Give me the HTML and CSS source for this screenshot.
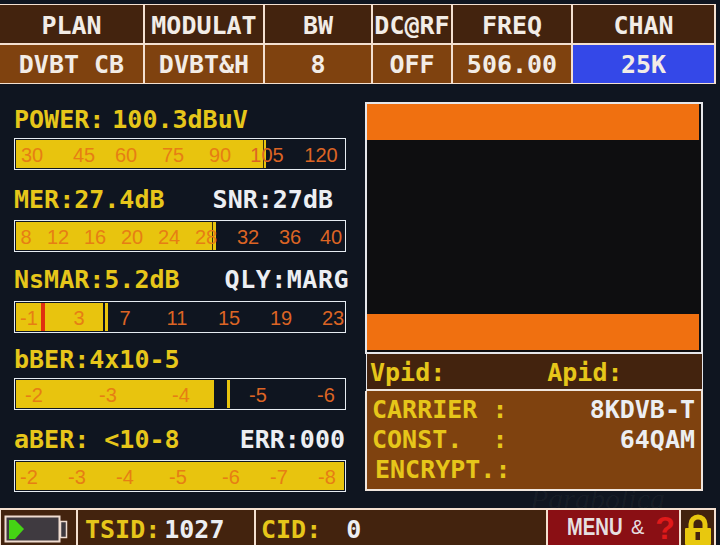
FILE: index.html
```html
<!DOCTYPE html>
<html lang="en">
<head>
  <meta charset="UTF-8">
  <meta name="viewport" content="width=device-width, initial-scale=1.0">
  <title>Meter</title>
  <link rel="stylesheet" href="styles.css">
</head>
<body>
  <div class="screen">
    <div class="top-table">
      <div class="cell head">PLAN</div>
      <div class="cell head">MODULAT</div>
      <div class="cell head">BW</div>
      <div class="cell head">DC@RF</div>
      <div class="cell head">FREQ</div>
      <div class="cell head">CHAN</div>
      <div class="cell val">DVBT CB</div>
      <div class="cell val">DVBT&amp;H</div>
      <div class="cell val">8</div>
      <div class="cell val">OFF</div>
      <div class="cell val">506.00</div>
      <div class="cell val active">25K</div>
    </div>

    <div class="main">
      <section class="gauges">
        <div class="reading r1">
          <div class="label"><span class="yellow name-power">POWER:</span><span class="yellow">100.3dBuV</span></div>
          <div class="gauge">
            <div class="fill" style="width:250px"></div>
            <div class="tick dark" style="left:248px"></div>
            <span class="mark on" style="left:17px;">30</span>
            <span class="mark on" style="left:69px;">45</span>
            <span class="mark on" style="left:111px;">60</span>
            <span class="mark on" style="left:158px;">75</span>
            <span class="mark on" style="left:205px;">90</span>
            <span class="mark" style="left:252px;">105</span>
            <span class="mark" style="left:306px;">120</span>
          </div>
        </div>
        <div class="reading r2">
          <div class="label"><span class="yellow">MER:27.4dB</span><span class="white snr">SNR:27dB</span></div>
          <div class="gauge">
            <div class="fill" style="width:200px"></div>
            <div class="tick dark" style="left:197px"></div>
            <span class="mark on" style="left:11px;">8</span>
            <span class="mark on" style="left:43px;">12</span>
            <span class="mark on" style="left:80px;">16</span>
            <span class="mark on" style="left:117px;">20</span>
            <span class="mark on" style="left:154px;">24</span>
            <span class="mark on" style="left:191px;">28</span>
            <span class="mark" style="left:233px;">32</span>
            <span class="mark" style="left:275px;">36</span>
            <span class="mark" style="left:316px;">40</span>
          </div>
        </div>
        <div class="reading r3">
          <div class="label"><span class="yellow">NsMAR:5.2dB</span><span class="white qly">QLY:MARG</span></div>
          <div class="gauge">
            <div class="fill" style="width:87px"></div>
            <div class="tick red" style="left:26px"></div>
            <div class="tick" style="left:90px"></div>
            <span class="mark on" style="left:14px;">-1</span>
            <span class="mark on" style="left:64px;">3</span>
            <span class="mark" style="left:110px;">7</span>
            <span class="mark" style="left:162px;">11</span>
            <span class="mark" style="left:214px;">15</span>
            <span class="mark" style="left:266px;">19</span>
            <span class="mark" style="left:318px;">23</span>
          </div>
        </div>
        <div class="reading r4">
          <div class="label"><span class="yellow">bBER:4x10-5</span></div>
          <div class="gauge">
            <div class="fill" style="width:198px"></div>
            <div class="tick" style="left:212px"></div>
            <span class="mark on" style="left:19px;">-2</span>
            <span class="mark on" style="left:93px;">-3</span>
            <span class="mark on" style="left:166px;">-4</span>
            <span class="mark" style="left:243px;">-5</span>
            <span class="mark" style="left:311px;">-6</span>
          </div>
        </div>
        <div class="reading r5">
          <div class="label"><span class="yellow">aBER: &lt;10-8</span><span class="white err">ERR:000</span></div>
          <div class="gauge">
            <div class="fill full"></div>
            <span class="mark on" style="left:14px;">-2</span>
            <span class="mark on" style="left:62px;">-3</span>
            <span class="mark on" style="left:110px;">-4</span>
            <span class="mark on" style="left:163px;">-5</span>
            <span class="mark on" style="left:216px;">-6</span>
            <span class="mark on" style="left:264px;">-7</span>
            <span class="mark on" style="left:312px;">-8</span>
          </div>
        </div>
      </section>

      <section class="panel">
        <div class="picture">
          <div class="band"></div>
          <div class="band"></div>
        </div>
        <div class="pids">
          <span class="yellow">Vpid:</span>
          <span class="yellow">Apid:</span>
        </div>
        <div class="info">
          <div class="info-row"><span class="yellow">CARRIER :</span><span class="white">8KDVB-T</span></div>
          <div class="info-row"><span class="yellow">CONST.&nbsp;&nbsp;:</span><span class="white">64QAM</span></div>
          <div class="info-row shifted"><span class="yellow">ENCRYPT.:</span></div>
        </div>
      </section>
    </div>

    <div class="status">
      <div class="st batt">
        <svg width="64" height="30" viewBox="0 0 64 30">
          <rect x="1.5" y="1.5" width="54" height="25" fill="#3f3a40" stroke="#f0dcd0" stroke-width="2"/>
          <rect x="56.5" y="6.5" width="6" height="16" fill="#3f3a40" stroke="#f0dcd0" stroke-width="1.5"/>
          <path d="M5 5 L11 5 L20 14 L11 24 L5 24 Z" fill="#45d414"/>
        </svg>
      </div>
      <div class="st tsid"><span class="yellow">TSID:</span><span class="white">1027</span></div>
      <div class="st cid"><span class="yellow">CID:</span><span class="white">0</span></div>
      <div class="st menu">
        <span class="menu-txt">MENU</span><span class="amp">&amp;</span><span class="help">?</span>
      </div>
      <div class="st lock">
        <svg width="26" height="31" viewBox="0 0 26 31">
          <path d="M6 15 V10 a7 7 0 0 1 14 0 V15" fill="none" stroke="#e8c80e" stroke-width="5"/>
          <rect x="0" y="14" width="26" height="17" rx="1" fill="#e8c80e"/>
          <rect x="10.5" y="18" width="4.5" height="8" fill="#43230e"/>
        </svg>
      </div>
    </div>
    <div class="watermark">Parabolica</div>
  </div>
</body>
</html>
```

FILE: styles.css
```css
html, body {
  margin: 0;
  padding: 0;
  background: #0f1520;
}
.screen {
  position: relative;
  width: 720px;
  height: 545px;
  overflow: hidden;
  font-family: "DejaVu Sans Mono", monospace;
  font-weight: bold;
  font-size: 25px;
  background: #0f1520;
  box-sizing: border-box;
  padding-top: 4px;
}
.yellow { color: #e6c61a; }
.white { color: #eceef2; }

/* top table */
.top-table {
  display: grid;
  grid-template-columns: 145px 120px 108px 80px 120px 143px;
  grid-template-rows: 40px 38px;
  width: 716px;
  border-top: 1px solid #f4e0d0;
  border-bottom: 2px solid #f4e0d0;
  box-sizing: border-box;
  height: 80px;
}
.cell {
  display: flex;
  align-items: center;
  justify-content: center;
  color: #f2ece6;
  border-right: 2px solid #f4e0d0;
  box-sizing: border-box;
  white-space: nowrap;
}
.head {
  padding-top: 2px;
  background: #43230e;
  border-bottom: 2px solid #f4e0d0;
}
.val {
  padding-top: 1px;
  background: #7f420f;
}
.active {
  background: #3448e8;
}

.main {
  display: flex;
  height: 424px;
}

/* gauges */
.gauges {
  width: 365px;
  box-sizing: border-box;
  padding: 18px 0 0 14px;
}
.reading {
  width: 332px;
  height: 80px;
}
.label {
  display: flex;
  justify-content: space-between;
  height: 34px;
  line-height: 35px;
  white-space: nowrap;
}
.r1 .label { justify-content: flex-start; }
.name-power { margin-right: 8px; }
.snr { margin-right: 13px; }
.qly { margin-right: -3px; letter-spacing: 0.5px; }
.err { margin-right: 1px; }
.r1 .gauge, .r4 .gauge { margin-top: 2px; }
.r2 .gauge, .r5 .gauge { margin-top: 4px; }
.r3 .gauge { margin-top: 5px; }
.gauge {
  position: relative;
  height: 32px;
  box-sizing: border-box;
  border: 1px solid #e6ecf2;
  overflow: hidden;
}
.fill {
  position: absolute;
  left: 1px;
  top: 1px;
  bottom: 1px;
  background: #e8c40e;
}
.fill.full { right: 1px; }
.tick {
  position: absolute;
  top: 1px;
  bottom: 1px;
  width: 3px;
  background: #e8c40e;
}
.tick.dark { width: 1px; background: #3a3010; }
.tick.red { width: 4px; background: #e03010; }
.mark {
  position: absolute;
  top: 0;
  line-height: 32px;
  transform: translateX(-50%);
  font-family: "Liberation Sans", sans-serif;
  font-weight: normal;
  font-size: 20px;
  color: #dc6424;
}
.mark.on { color: #e67e14; }

/* right panel */
.panel {
  width: 338px;
  margin-top: 18px;
}
.picture {
  display: flex;
  flex-direction: column;
  justify-content: space-between;
  height: 252px;
  box-sizing: border-box;
  border: 2px solid #e6e6ea;
  background: #0e0e10;
  padding: 0 2px 2px 0;
}
.band {
  height: 36px;
  background: #f07010;
}
.pids {
  display: flex;
  gap: 102px;
  height: 37px;
  box-sizing: border-box;
  padding-left: 3px;
  margin-left: 1px;
  line-height: 38px;
  background: #43230e;
  border-left: 1px solid #e6e6ea;
  border-right: 1px solid #e6e6ea;
  border-bottom: 2px solid #f0e6de;
}
.info {
  height: 100px;
  box-sizing: border-box;
  padding: 4px 6px 0 5px;
  background: #7f420f;
  border: 2px solid #f0e6de;
  border-top: 0;
}
.info-row {
  display: flex;
  justify-content: space-between;
  height: 30px;
  line-height: 30px;
}
.info-row.shifted { padding-left: 3px; }

/* bottom bar */
.status {
  position: absolute;
  left: 0;
  top: 508px;
  display: flex;
  width: 716px;
  height: 37px;
  border-top: 2px solid #f4e0d0;
  border-left: 1px solid #f4e0d0;
  box-sizing: border-box;
}
.st {
  display: flex;
  align-items: center;
  background: #43230e;
  border-right: 2px solid #f4e0d0;
  box-sizing: border-box;
  white-space: nowrap;
  padding-top: 3px;
}
.batt { width: 77px; padding: 4px 0 0 3px; }
.tsid { width: 178px; padding-left: 7px; gap: 4px; }
.cid { width: 292px; padding-left: 5px; gap: 25px; }
.menu {
  width: 133px;
  padding: 0 0 0 19px;
  background: #8a0f14;
  color: #e6dfe0;
  font-family: "Liberation Sans", sans-serif;
}
.menu-txt {
  display: inline-block;
  width: 56px;
  font-size: 23px;
  transform: scaleX(0.82);
  transform-origin: left center;
}
.amp {
  margin-left: 8px;
  font-size: 20px;
  font-weight: normal;
}
.help {
  margin-left: 11px;
  font-size: 32px;
  line-height: 32px;
  color: #e01a1a;
}
.lock {
  width: 35px;
  padding: 2px 0 0 4px;
  align-items: flex-end;
}

.watermark {
  position: absolute;
  left: 530px;
  top: 482px;
  font-family: "Liberation Serif", serif;
  font-style: italic;
  font-weight: normal;
  font-size: 30px;
  color: rgba(255, 255, 255, 0.04);
  pointer-events: none;
}
```
